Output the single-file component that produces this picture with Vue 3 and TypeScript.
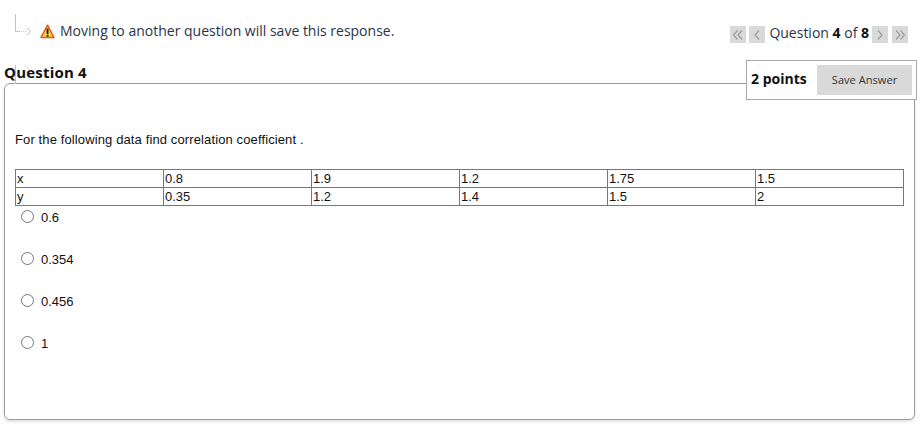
<script setup lang="ts">
const rows: string[][] = [
  ['x', '0.8', '1.9', '1.2', '1.75', '1.5'],
  ['y', '0.35', '1.2', '1.4', '1.5', '2'],
]
const options: string[] = ['0.6', '0.354', '0.456', '1']
</script>

<template>
  <div class="page">
    <div class="top">
      <div class="notice">
        <svg class="arrow" width="17" height="22" viewBox="0 0 17 22" fill="none">
          <path d="M0.5 0V17.5H4" stroke="#c4c4c4" />
          <path d="M4 17.5H12" stroke="#c4c4c4" stroke-dasharray="1 1" />
          <path d="M12 14l3.5 3.5L12 21" stroke="#c4c4c4" />
        </svg>
        <svg class="warn" width="15" height="15" viewBox="0 0 15 15">
          <path d="M7.5 1.2L14 13.6H1Z" fill="#fcd44c" stroke="#f0561c" stroke-width="1.5" stroke-linejoin="round" />
          <rect x="6.6" y="4.6" width="1.9" height="5.4" fill="#1c1c1c" />
          <rect x="6.6" y="10.8" width="1.9" height="1.8" fill="#1c1c1c" />
        </svg>
        <span class="notice-text">Moving to another question will save this response.</span>
      </div>
      <div class="pager">
        <span class="pg">
          <svg width="12" height="12" viewBox="0 0 12 12" fill="none" stroke="#9c9c9c" stroke-width="1.2"><path d="M5.5 1.5L1.5 6l4 4.5M10 1.5L6 6l4 4.5" /></svg>
        </span>
        <span class="pg pg-b">
          <svg width="12" height="12" viewBox="0 0 12 12" fill="none" stroke="#9c9c9c" stroke-width="1.2"><path d="M8 1.5L4 6l4 4.5" /></svg>
        </span>
        <span class="pager-text">Question <b>4</b> of <b>8</b></span>
        <span class="pg pg-c">
          <svg width="12" height="12" viewBox="0 0 12 12" fill="none" stroke="#9c9c9c" stroke-width="1.2"><path d="M4 1.5L8 6l-4 4.5" /></svg>
        </span>
        <span class="pg pg-d">
          <svg width="12" height="12" viewBox="0 0 12 12" fill="none" stroke="#9c9c9c" stroke-width="1.2"><path d="M2 1.5L6 6l-4 4.5M6.5 1.5l4 4.5-4 4.5" /></svg>
        </span>
      </div>
    </div>

    <div class="question">
      <svg class="arrow2" width="17" height="19" viewBox="0 0 17 19" fill="none">
        <path d="M0.5 0V19" stroke="#c4c4c4" />
        <path d="M10 0.5l4 4-3 3" stroke="#d4d4d4" />
      </svg>
      <h2 class="q-title">Question 4</h2>
      <div class="points">
        <span class="pts">2 points</span>
        <button class="save" type="button"><span class="save-label">Save Answer</span></button>
      </div>
      <div class="card">
        <p class="prompt">For the following data find correlation coefficient .</p>
        <table class="data">
          <tbody>
            <tr v-for="(row, r) in rows" :key="r">
              <td v-for="(cell, c) in row" :key="c">{{ cell }}</td>
            </tr>
          </tbody>
        </table>
        <ul class="opts">
          <li v-for="o in options" :key="o" class="opt">
            <span class="radio"></span>
            <span class="opt-label">{{ o }}</span>
          </li>
        </ul>
      </div>
    </div>
  </div>
</template>

<style>
html, body { margin: 0; background: #fff; }
</style>

<style scoped>
.page {
  width: 923px;
  height: 448px;
  overflow: hidden;
  background: #fff;
  font-family: "Open Sans", sans-serif;
  color: #111;
  box-sizing: border-box;
  padding-top: 14px;
}
.top {
  display: flex;
  justify-content: space-between;
  height: 46px;
  padding: 0 15px 0 15px;
}
.notice {
  display: flex;
  align-items: flex-start;
}
.arrow { flex: none; }
.warn { flex: none; margin: 10px 5px 0 8px; }
.notice-text {
  font-size: 14px;
  line-height: 20px;
  margin-top: 7px;
  color: #2b3447;
}
.pager {
  display: flex;
  align-items: flex-start;
  padding-top: 12px;
}
.pg {
  width: 16px;
  height: 17px;
  background: #d9d9d9;
  display: flex;
  align-items: center;
  justify-content: center;
}
.pg-b { margin-left: 3px; }
.pg-c { margin-left: 3px; }
.pg-d { margin-left: 4px; }
.pager-text {
  font-size: 14px;
  line-height: 18px;
  margin: -2px 0 0 4px;
  color: #2b3447;
}
.pager-text b { color: #111; font-weight: 700; }
.question {
  position: relative;
  padding: 0 8px 0 4px;
}
.arrow2 { position: absolute; left: 15px; top: 5px; }
.q-title {
  position: relative;
  margin: 0;
  padding-top: 1px;
  font-size: 15px;
  line-height: 22px;
  font-weight: 700;
  letter-spacing: 0.2px;
  color: #111;
}
.points {
  position: absolute;
  top: 0;
  left: 746px;
  width: 171px;
  height: 40px;
  box-sizing: border-box;
  border: 1px solid #aaa;
  background: #fff;
  display: flex;
  align-items: center;
  justify-content: space-between;
  padding: 0 4px;
  z-index: 1;
}
.pts {
  font-size: 14px;
  font-weight: 700;
  margin-top: -3px;
  color: #111;
}
.save {
  width: 95px;
  height: 30px;
  border: 0;
  background: #d9d9d9;
  font-family: "Open Sans", sans-serif;
  font-size: 11px;
  color: #333;
  padding: 0 0 2px;
}
.save-label { letter-spacing: 0.05px; }
.card {
  width: 911px;
  height: 337px;
  box-sizing: border-box;
  border: 1px solid #9a9a9a;
  border-radius: 6px;
  box-shadow: 0 2px 3px rgba(0, 0, 0, 0.12);
  padding: 47px 10px 0;
  font-family: "Liberation Sans", Arial, sans-serif;
  font-size: 13px;
  color: #111;
}
.prompt {
  margin: 0 0 21px;
  line-height: 17px;
  letter-spacing: 0.12px;
}
.data {
  width: 889px;
  border-collapse: collapse;
  table-layout: fixed;
}
.data td {
  border: 1px solid #777;
  height: 18px;
  padding: 0 1px;
  line-height: 15px;
  box-sizing: border-box;
}
.opts {
  list-style: none;
  margin: 0;
  padding: 0;
}
.opt {
  display: flex;
  align-items: center;
  height: 42px;
  padding: 0 0 21px 6px;
  box-sizing: border-box;
}
.radio {
  width: 13px;
  height: 13px;
  box-sizing: border-box;
  border: 1px solid #767676;
  border-radius: 50%;
  margin-right: 7px;
  background: #fff;
}
.opt-label { margin-top: 1px; }
</style>
